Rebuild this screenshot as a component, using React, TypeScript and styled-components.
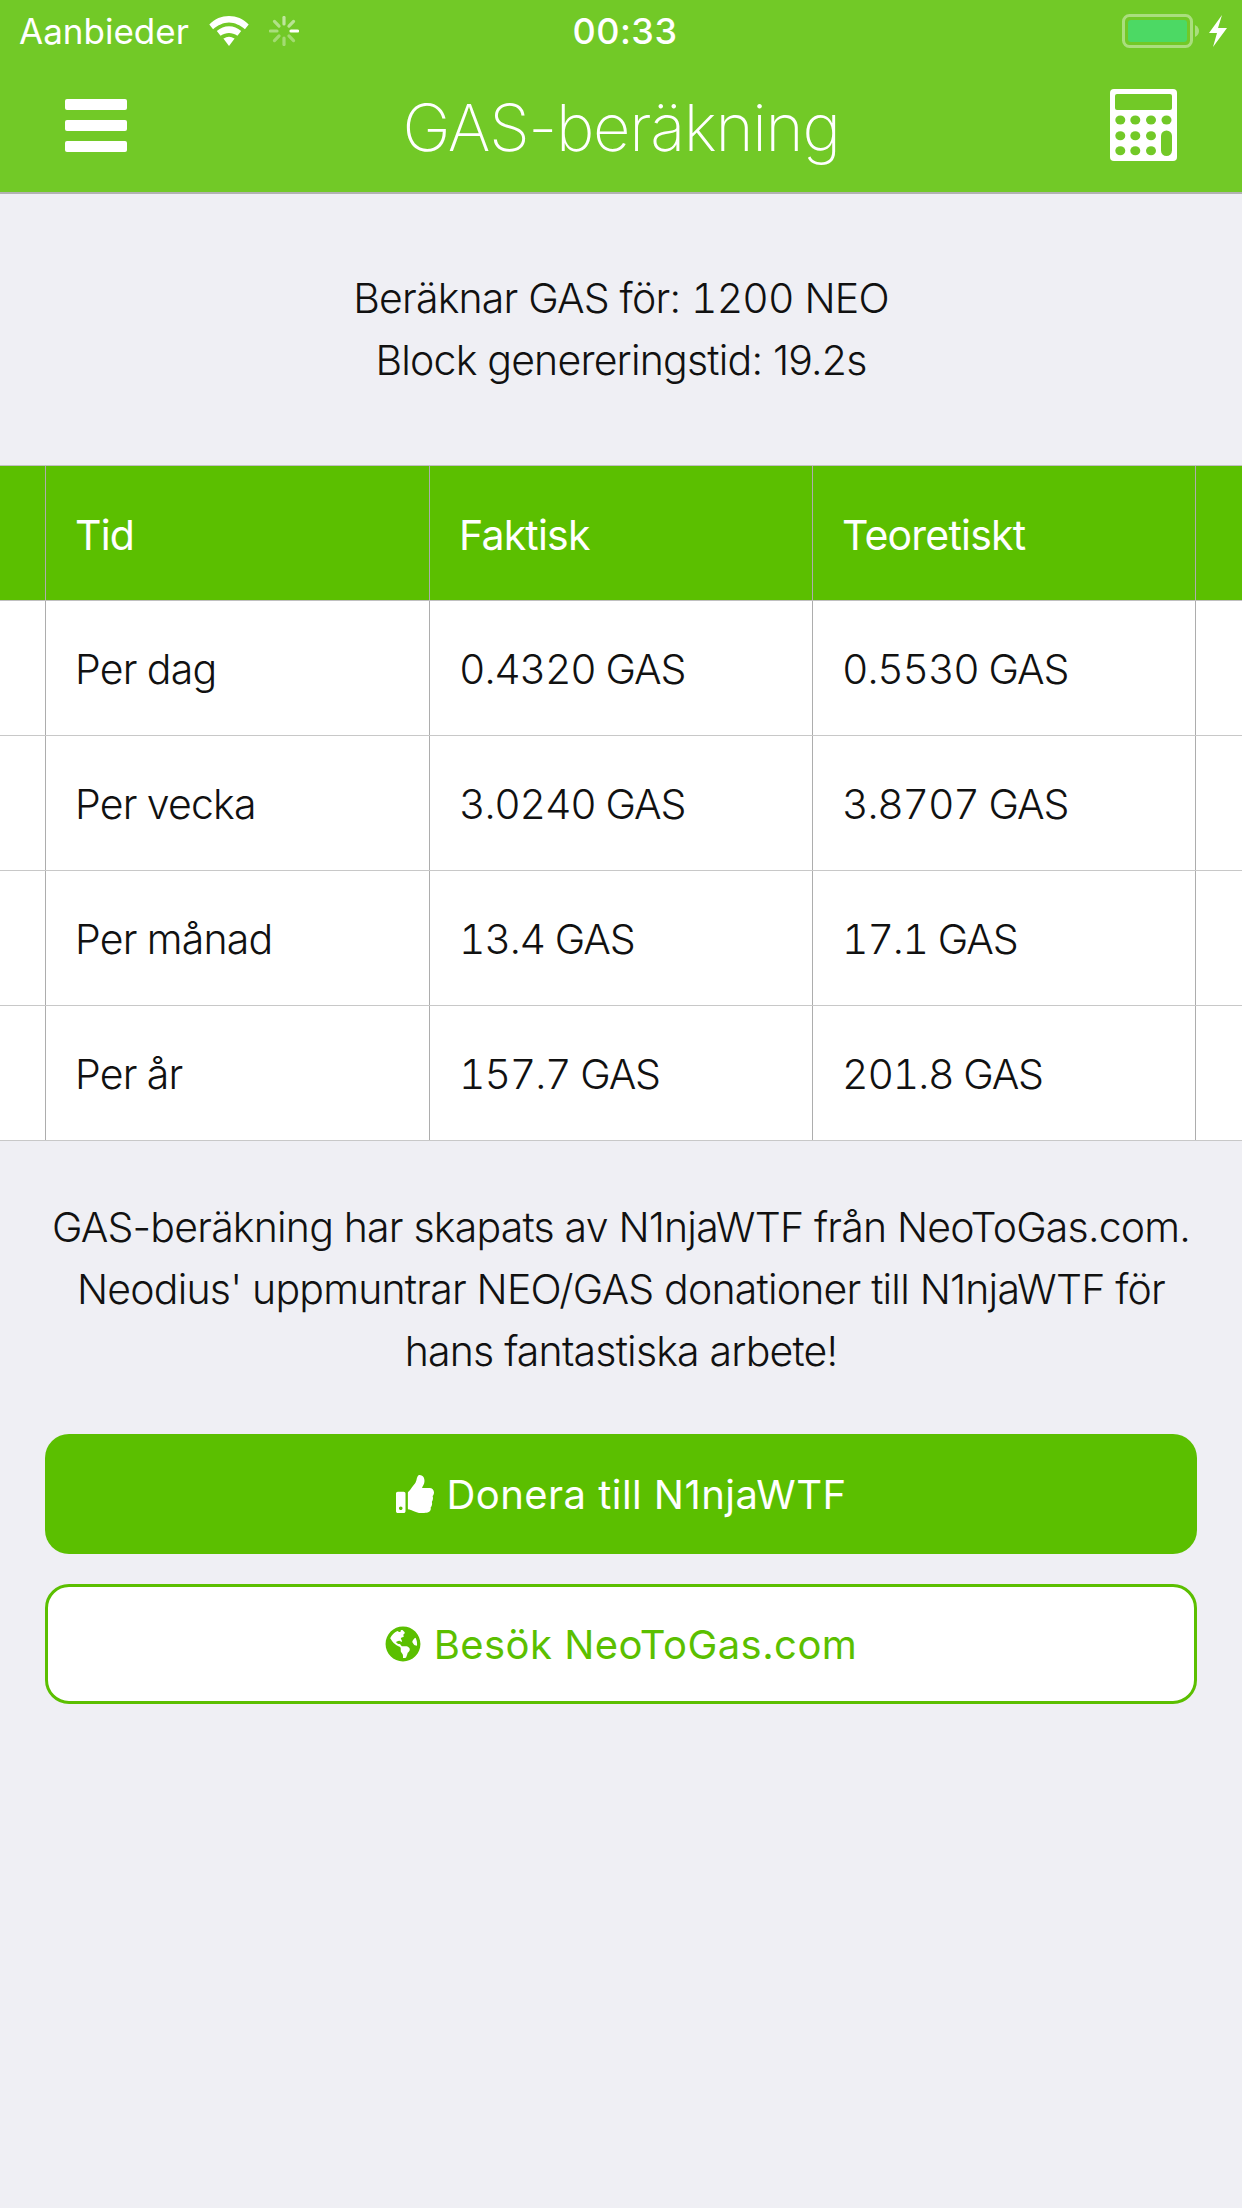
import React from "react";
import styled, { createGlobalStyle } from "styled-components";
import { FaGlobeAmericas, FaThumbsUp } from "react-icons/fa";

const Global = createGlobalStyle`
  html, body { margin: 0; padding: 0; background: #efeff4; }
  body { font-family: "Liberation Sans", Arial, sans-serif; }
  * { box-sizing: border-box; }
`;
const Page = styled.div`width: 1242px; height: 2208px; background: #efeff4; overflow: hidden; color: #111;`;
const Header = styled.header`height: 194px; background: #72c927; border-bottom: 2px solid #b2b2b2; color: #fff; display: flex; flex-direction: column;`;
const StatusBar = styled.div`height: 60px; padding: 1px 15px 0 19px; display: grid; grid-template-columns: 1fr auto 1fr; align-items: center; font-family: Inter, sans-serif; font-size: 35px;`;
const StatusLeft = styled.div`display: flex; align-items: center; gap: 19px;`;
const StatusRight = styled.div`display: flex; align-items: center; justify-content: flex-end; gap: 9px;`;
const Clock = styled.div`font-weight: 500; font-size: 36px; letter-spacing: 0.5px; margin-left: 4px;`;
const NavBar = styled.div`flex: 1; display: grid; grid-template-columns: 1fr auto 1fr; align-items: center; padding: 0 65px 2px;`;
const Title = styled.h1`margin: 4px 0 0; font-family: Inter, sans-serif; font-weight: 200; font-size: 65px; letter-spacing: -1.300px;`;
const Burger = styled.div`width: 62px; display: flex; flex-direction: column; gap: 10px;`;
const Bar = styled.span`display: block; height: 11px; border-radius: 2px; background: #fff;`;
const CalcSlot = styled.div`display: flex; justify-content: flex-end;`;
const Info = styled.p<{ $top: number; $bottom: number }>`margin: 0; padding: ${(p) => p.$top}px 0 ${(p) => p.$bottom}px; white-space: nowrap; text-align: center; font-family: Inter, sans-serif; font-weight: 300; font-size: 41px; line-height: 62px; letter-spacing: -0.8px;`;
const Tabular = styled.span`font-variant-numeric: tabular-nums;`;
const Table = styled.div`border-top: 1px solid #c0c0c0; overflow: hidden;`;
const Row = styled.div<{ $head?: boolean }>`display: grid; grid-template-columns: 45px 384px 383px 383px 47px; height: 135px; background: ${(p) => (p.$head ? "#5bbf00" : "#fff")}; color: ${(p) => (p.$head ? "#fff" : "#111")}; border-bottom: 1px solid ${(p) => (p.$head ? "#c0c0c0" : "#c8c8c8")};`;
const Cell = styled.div<{ $head?: boolean; $num?: boolean }>`display: flex; align-items: center; padding: ${(p) => (p.$head ? "3px" : "2px")} 0 0 29px; border-left: 1px solid #adadad; font-family: Inter, sans-serif; font-weight: ${(p) => (p.$head ? 400 : 300)}; font-size: 41px; letter-spacing: ${(p) => (p.$num ? "-1.150px" : "-0.8px")}; font-variant-numeric: tabular-nums; &:first-child { border-left: 0; padding: 0; }`;
const Buttons = styled.div`padding: 0 45px; display: flex; flex-direction: column; gap: 30px;`;
const Button = styled.div<{ $outline?: boolean }>`height: 120px; border-radius: 24px; display: flex; align-items: center; justify-content: center; gap: 13px; font-family: Inter, sans-serif; font-size: 40px; letter-spacing: 0.45px; background: ${(p) => (p.$outline ? "#fff" : "#5bbf00")}; color: ${(p) => (p.$outline ? "#5bbf00" : "#fff")}; border: ${(p) => (p.$outline ? "3px solid #5bbf00" : "none")};`;

const Wifi = () => (
  <svg width="42" height="30" viewBox="0 0 42 32" fill="#fff">
    <path d="M21 0C13 0 6 3 0 9l4 5c5-4 11-7 17-7s12 3 17 7l4-5C36 3 29 0 21 0Z" />
    <path d="M21 11c-5 0-9 2-13 5l4 5c3-2 6-3 9-3s6 1 9 3l4-5c-4-3-8-5-13-5Z" />
    <path d="M21 22c-2 0-4 1-6 2l6 8 6-8c-2-1-4-2-6-2Z" />
  </svg>
);
const Spinner = () => (
  <svg width="30" height="30" viewBox="-15 -15 30 30" stroke="#fff" strokeWidth="3.200" strokeLinecap="round">
    {[0, 1, 2, 3, 4, 5, 6, 7].map((i) => (
      <line key={i} x1="0" y1="-7" x2="0" y2="-13.500" opacity={[0.55, 0.5, 1, 0.35, 0.35, 0.35, 0.4, 0.45][i]} transform={`rotate(${i * 45})`} />
    ))}
  </svg>
);
const Battery = () => (
  <svg width="78" height="34" viewBox="0 0 78 34">
    <rect x="1.500" y="1.500" width="68" height="31" rx="6" fill="none" stroke="#fff" strokeOpacity=".4" strokeWidth="3" />
    <rect x="6" y="6" width="59" height="22" rx="3" fill="#4cd964" />
    <path d="M73 11c3 1.500 4 4 4 6s-1 4.500-4 6Z" fill="#fff" fillOpacity=".4" />
  </svg>
);
const Bolt = () => (
  <svg width="18" height="32" viewBox="0 0 18 32" fill="#fff"><path d="M13 0 0 18h8L4 32 18 13H9Z" /></svg>
);
const Calculator = () => (
  <svg width="67" height="72" viewBox="0 0 67 72">
    <rect width="67" height="72" rx="4" fill="#fff" />
    <rect x="5" y="5" width="57" height="16" rx="2" fill="#72c927" />
    {[31, 46.700, 61.700].map((y) =>
      [10.300, 25.300, 41, 56.500].map((x) =>
        x > 50 && y > 40 ? null : <ellipse key={`${x}-${y}`} cx={x} cy={y} rx="5" ry="4.500" fill="#72c927" />
      )
    )}
    <rect x="51" y="41.500" width="11" height="25.500" rx="5.500" fill="#72c927" />
  </svg>
);

const rows = [
  ["Per dag", "0.4320 GAS", "0.5530 GAS"],
  ["Per vecka", "3.0240 GAS", "3.8707 GAS"],
  ["Per månad", "13.4 GAS", "17.1 GAS"],
  ["Per år", "157.7 GAS", "201.8 GAS"],
];

export default function App() {
  return (
    <Page>
      <Global />
      <Header>
        <StatusBar>
          <StatusLeft>Aanbieder <Wifi /><Spinner /></StatusLeft>
          <Clock>00:33</Clock>
          <StatusRight><Battery /><Bolt /></StatusRight>
        </StatusBar>
        <NavBar>
          <Burger><Bar /><Bar /><Bar /></Burger>
          <Title>GAS-beräkning</Title>
          <CalcSlot><Calculator /></CalcSlot>
        </NavBar>
      </Header>
      <Info $top={73} $bottom={74}>Beräknar GAS för: <Tabular>1200</Tabular> NEO<br />Block genereringstid: 19.2s</Info>
      <Table>
        <Row $head><Cell $head /><Cell $head>Tid</Cell><Cell $head>Faktisk</Cell><Cell $head>Teoretiskt</Cell><Cell $head /></Row>
        {rows.map((r) => (
          <Row key={r[0]}><Cell /><Cell>{r[0]}</Cell><Cell $num>{r[1]}</Cell><Cell $num>{r[2]}</Cell><Cell /></Row>
        ))}
      </Table>
      <Info $top={55} $bottom={52}>GAS-beräkning har skapats av N1njaWTF från NeoToGas.com.<br />Neodius' uppmuntrar NEO/GAS donationer till N1njaWTF för<br />hans fantastiska arbete!</Info>
      <Buttons>
        <Button><FaThumbsUp size={38} />Donera till N1njaWTF</Button>
        <Button $outline><FaGlobeAmericas size={36} />Besök NeoToGas.com</Button>
      </Buttons>
    </Page>
  );
}
